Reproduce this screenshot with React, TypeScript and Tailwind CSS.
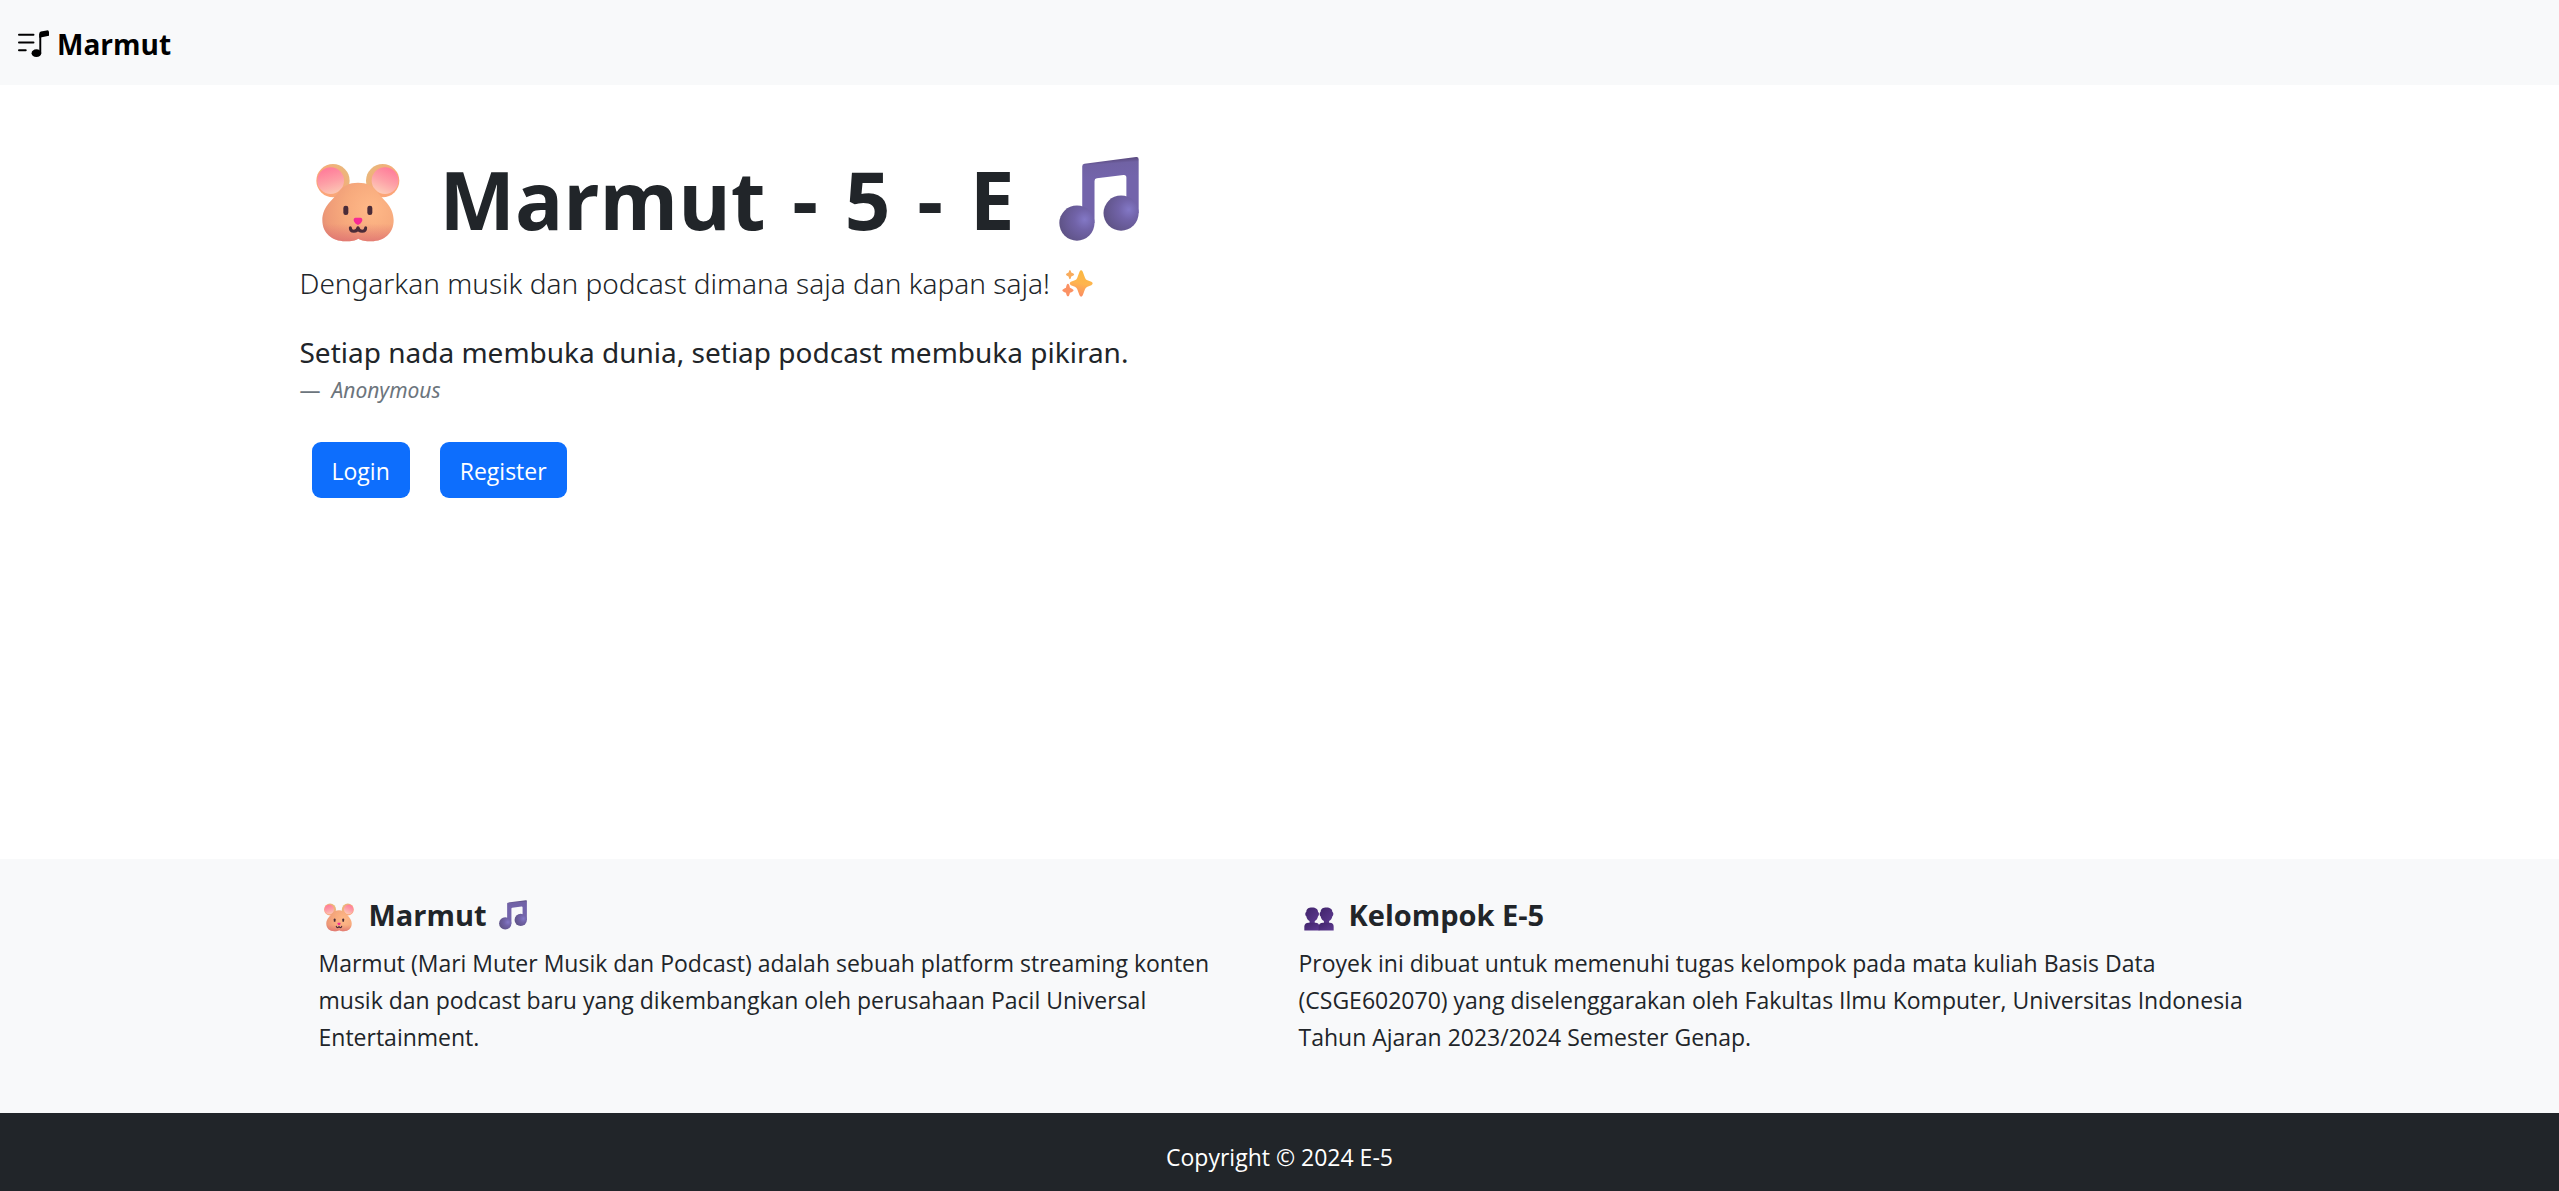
import { useId } from "react";
import { BsMusicNoteList } from "react-icons/bs";

type IconProps = { className: string };

function Mouse({ className }: IconProps) {
  const id = useId();
  return (
    <svg viewBox="50 40 252 240" className={className} role="img" aria-label="Marmut">
      <defs>
        <radialGradient id={`${id}l`} gradientUnits="userSpaceOnUse" cx="80" cy="105" r="72">
          <stop offset="0.5" stopColor="#fba578" />
          <stop offset="1" stopColor="#eab77c" />
        </radialGradient>
        <radialGradient id={`${id}r`} gradientUnits="userSpaceOnUse" cx="272" cy="108" r="74">
          <stop offset="0.5" stopColor="#fba578" />
          <stop offset="1" stopColor="#eab77c" />
        </radialGradient>
        <linearGradient id={`${id}i`} x1="0.3" y1="0" x2="0.6" y2="1">
          <stop offset="0.1" stopColor="#ff7f9b" />
          <stop offset="0.55" stopColor="#fd9fa6" />
          <stop offset="1" stopColor="#fcc7b4" />
        </linearGradient>
        <linearGradient id={`${id}j`} x1="0.8" y1="0" x2="0.35" y2="1">
          <stop offset="0.1" stopColor="#ff7f9b" />
          <stop offset="0.55" stopColor="#fda2a8" />
          <stop offset="1" stopColor="#fdcdb8" />
        </linearGradient>
        <radialGradient id={`${id}h`} gradientUnits="userSpaceOnUse" cx="215" cy="180" r="160">
          <stop offset="0" stopColor="#ffb988" />
          <stop offset="0.5" stopColor="#f7aa7d" />
          <stop offset="0.85" stopColor="#ee9a77" />
          <stop offset="1" stopColor="#e28c76" />
        </radialGradient>
        <linearGradient id={`${id}b`} x1="0" y1="0" x2="0" y2="1">
          <stop offset="0.7" stopColor="#d8616f" stopOpacity="0" />
          <stop offset="1" stopColor="#d8616f" stopOpacity="0.6" />
        </linearGradient>
      </defs>
      <circle cx="101" cy="93" r="50" fill={`url(#${id}l)`} />
      <circle cx="250" cy="93" r="50" fill={`url(#${id}r)`} />
      <circle cx="94" cy="93" r="40" fill={`url(#${id}i)`} />
      <circle cx="257" cy="93" r="40" fill={`url(#${id}j)`} />
      {[`url(#${id}h)`, `url(#${id}b)`].map((fill) => (
        <path
          key={fill}
          fill={fill}
          d="M176 99C150 99 130 109 118 127C106 146 69 168 69 212C69 250 98 275 138 275C158 275 166 273 177 267C188 273 198 275 216 275C255 275 283 250 283 212C283 168 246 146 234 127C222 109 202 99 176 99Z"
        />
      ))}
      <rect x="132" y="168" width="15" height="28" rx="7" fill="#4a2b38" />
      <rect x="204" y="168" width="15" height="28" rx="7" fill="#4a2b38" />
      <path
        d="M163 210C163 203 170 204 176 204C182 204 189 203 189 210C189 217 181 225 176 225C171 225 163 217 163 210Z"
        fill="#f72a94"
      />
      <path
        d="M153 234C153 248 173 249 176 234C179 249 199 248 199 234"
        fill="none"
        stroke="#4a2b38"
        strokeWidth="9"
        strokeLinecap="round"
        strokeLinejoin="round"
      />
    </svg>
  );
}

function Notes({ className }: IconProps) {
  const id = useId();
  return (
    <svg viewBox="60 172 241 257" className={className} role="img" aria-label="Musik">
      <defs>
        <radialGradient id={`${id}a`} cx="0.72" cy="0.4" r="0.72">
          <stop offset="0" stopColor="#8378c6" />
          <stop offset="0.4" stopColor="#7163a8" />
          <stop offset="1" stopColor="#5f5387" />
        </radialGradient>
        <linearGradient id={`${id}s`} gradientUnits="userSpaceOnUse" x1="215" y1="182" x2="219" y2="236">
          <stop offset="0" stopColor="#5c4c82" />
          <stop offset="0.22" stopColor="#7062a4" />
          <stop offset="1" stopColor="#7364ab" />
        </linearGradient>
      </defs>
      <path
        d="M130 202Q130 195 137 194L292 174Q300 173 300 181V343H263V236Q263 227 254 228L174 238Q167 239 167 246V373H130Z"
        fill={`url(#${id}s)`}
      />
      <circle cx="114" cy="373" r="53" fill={`url(#${id}a)`} />
      <circle cx="247" cy="343" r="53" fill={`url(#${id}a)`} />
    </svg>
  );
}

function Sparkles({ className }: IconProps) {
  const id = useId();
  return (
    <svg viewBox="64 506 94 86" className={className} role="img" aria-label="Berkilau">
      <defs>
        <linearGradient id={id} x1="0.6" y1="0" x2="0.4" y2="1">
          <stop offset="0" stopColor="#fbb840" />
          <stop offset="0.5" stopColor="#feb54f" />
          <stop offset="1" stopColor="#fb8a63" />
        </linearGradient>
      </defs>
      <path
        fill={`url(#${id})`}
        d="M117 513Q122 504 127 513L134 532Q136 537 141 539L153 544Q161 549 153 554L141 559Q136 561 134 566L127 585Q122 594 117 585L110 566Q108 561 103 559L91 554Q84 549 91 544L103 539Q108 537 110 532Z"
      />
      <path fill="#f9ac5c" d="M88 508Q91 508 92 516Q101 519 101 522Q101 525 92 528Q91 536 88 536Q85 536 84 528Q76 525 76 522Q76 519 84 516Q85 508 88 508Z" />
      <path fill="#fb9163" d="M82 550Q86 550 88 562Q99 567 99 570Q99 573 88 577Q86 588 82 588Q78 588 76 577Q65 573 65 570Q65 567 76 562Q78 550 82 550Z" />
    </svg>
  );
}

function People({ className }: IconProps) {
  const id = useId();
  return (
    <svg viewBox="71 81 92 73" className={className} role="img" aria-label="Kelompok">
      <defs>
        <linearGradient id={id} x1="0" y1="0" x2="1" y2="1">
          <stop offset="0" stopColor="#40246a" />
          <stop offset="1" stopColor="#5f3b92" />
        </linearGradient>
      </defs>
      {[0, 44].map((x) => (
        <g key={x} transform={`translate(${x} 0)`} fill={`url(#${id})`}>
          <path d="M78 96C78 86 85 82 96 82C107 82 114 87 114 96C118 97 118 107 114 109C113 116 109 121 104 124V133H88V124C83 121 79 116 78 109C74 107 74 97 78 96Z" />
          <path d="M72 153V141C72 133 77 129 85 129H106C114 129 118 134 118 141V153Z" />
        </g>
      ))}
    </svg>
  );
}

const buttonClass =
  "flex h-14 items-center rounded-[9px] bg-[#0d6efd] px-5 pt-[2px] text-[23px] text-white hover:bg-[#0b5ed7]";

export default function App() {
  return (
    <div className="flex min-h-screen flex-col bg-white font-['Open_Sans','Noto_Sans',sans-serif] text-[23px] leading-[37px] text-[#212529]">
      <nav className="flex bg-[#f8f9fa] px-[18px] pt-6 pb-[22px]">
        <a href="#" className="flex items-center gap-2 text-[28px] font-bold text-black">
          <BsMusicNoteList className="size-[31px]" />
          <span className="pt-[2px]">Marmut</span>
        </a>
      </nav>

      <main className="mx-auto w-full max-w-[1960px] flex-1 pt-16">
        <h1 className="flex items-center pl-4 text-[80px] leading-[100px] font-bold">
          <Mouse className="mt-2 h-20 w-[84px]" />
          <span className="mr-11 ml-10">
            Marmut <span className="mx-[6px]">-</span> 5 <span className="mx-[6px]">-</span> E
          </span>
          <Notes className="h-[86px] w-20" />
        </h1>
        <p className="mt-[13px] flex items-center gap-3 font-['Noto_Sans','Open_Sans',sans-serif] text-[28px] leading-[42px] font-light">
          Dengarkan musik dan podcast dimana saja dan kapan saja!
          <Sparkles className="h-[29px] w-[31px]" />
        </p>
        <figure className="mt-[26px] font-['Noto_Sans','Open_Sans',sans-serif]">
          <blockquote className="text-[28px] leading-[44px]">
            <p>Setiap nada membuka dunia, setiap podcast membuka pikiran.</p>
          </blockquote>
          <figcaption className="text-[21px] leading-8 text-[#6c757d]">
            —&nbsp; <cite>Anonymous</cite>
          </figcaption>
        </figure>
        <div className="mt-9 ml-3 flex gap-[30px]">
          <button type="button" className={buttonClass}>Login</button>
          <button type="button" className={buttonClass}>Register</button>
        </div>
      </main>

      <footer>
        <div className="bg-[#f8f9fa] pt-[38px] pb-[57px]">
          <div className="mx-auto grid w-full max-w-[1960px] grid-cols-2">
            <section className="pr-4 pl-[19px]">
              <h2 className="mb-3 flex items-center pl-[5px] text-[29px] leading-9 font-bold">
                <Mouse className="mt-1 h-[29px] w-[30px]" />
                <span className="mr-3 ml-[15px]">Marmut</span>
                <Notes className="h-[30px] w-7" />
              </h2>
              <p>
                Marmut (Mari Muter Musik dan Podcast) adalah sebuah platform streaming konten musik dan podcast baru
                yang dikembangkan oleh perusahaan Pacil Universal Entertainment.
              </p>
            </section>
            <section className="pr-4 pl-[19px]">
              <h2 className="mb-3 flex items-center pl-[5px] text-[29px] leading-9 font-bold">
                <People className="mt-2 h-6 w-[30px]" />
                <span className="ml-[15px]">Kelompok E-5</span>
              </h2>
              <p>
                Proyek ini dibuat untuk memenuhi tugas kelompok pada mata kuliah Basis Data (CSGE602070) yang
                diselenggarakan oleh Fakultas Ilmu Komputer, Universitas Indonesia Tahun Ajaran 2023/2024 Semester
                Genap.
              </p>
            </section>
          </div>
        </div>
        <div className="bg-[#212529] pt-[26px] pb-[15px] text-center text-white">Copyright © 2024 E-5</div>
      </footer>
    </div>
  );
}
